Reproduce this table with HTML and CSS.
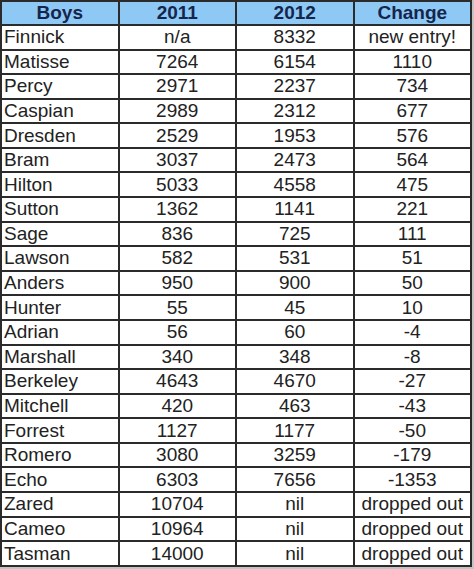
FILE: index.html
```html
<!DOCTYPE html>
<html>
<head>
<meta charset="utf-8">
<link rel="stylesheet" href="styles.css">
</head>
<body>
<table class="names">
<thead>
<tr><th>Boys</th><th>2011</th><th>2012</th><th>Change</th></tr>
</thead>
<tbody>
<tr><td class="name">Finnick</td><td>n/a</td><td>8332</td><td>new entry!</td></tr>
<tr><td class="name">Matisse</td><td>7264</td><td>6154</td><td>1110</td></tr>
<tr><td class="name">Percy</td><td>2971</td><td>2237</td><td>734</td></tr>
<tr><td class="name">Caspian</td><td>2989</td><td>2312</td><td>677</td></tr>
<tr><td class="name">Dresden</td><td>2529</td><td>1953</td><td>576</td></tr>
<tr><td class="name">Bram</td><td>3037</td><td>2473</td><td>564</td></tr>
<tr><td class="name">Hilton</td><td>5033</td><td>4558</td><td>475</td></tr>
<tr><td class="name">Sutton</td><td>1362</td><td>1141</td><td>221</td></tr>
<tr><td class="name">Sage</td><td>836</td><td>725</td><td>111</td></tr>
<tr><td class="name">Lawson</td><td>582</td><td>531</td><td>51</td></tr>
<tr><td class="name">Anders</td><td>950</td><td>900</td><td>50</td></tr>
<tr><td class="name">Hunter</td><td>55</td><td>45</td><td>10</td></tr>
<tr><td class="name">Adrian</td><td>56</td><td>60</td><td>-4</td></tr>
<tr><td class="name">Marshall</td><td>340</td><td>348</td><td>-8</td></tr>
<tr><td class="name">Berkeley</td><td>4643</td><td>4670</td><td>-27</td></tr>
<tr><td class="name">Mitchell</td><td>420</td><td>463</td><td>-43</td></tr>
<tr><td class="name">Forrest</td><td>1127</td><td>1177</td><td>-50</td></tr>
<tr><td class="name">Romero</td><td>3080</td><td>3259</td><td>-179</td></tr>
<tr><td class="name">Echo</td><td>6303</td><td>7656</td><td>-1353</td></tr>
<tr><td class="name">Zared</td><td>10704</td><td>nil</td><td>dropped out</td></tr>
<tr><td class="name">Cameo</td><td>10964</td><td>nil</td><td>dropped out</td></tr>
<tr><td class="name">Tasman</td><td>14000</td><td>nil</td><td>dropped out</td></tr>
</tbody>
</table>
</body>
</html>
```
FILE: styles.css
```css
html, body {
  margin: 0;
  padding: 0;
  background: #c4c4c4;
}
body {
  width: 474px;
  height: 569px;
  overflow: hidden;
}
.names {
  border-collapse: collapse;
  width: 472px;
  height: 567px;
  table-layout: fixed;
  background: #fff;
  font-family: "Liberation Sans", Arial, sans-serif;
  font-size: 19px;
  color: #222;
  border: 2px solid #707070;
}
.names th, .names td {
  border: 2px solid #2b2b2b;
  padding: 0 2px;
  text-align: center;
  line-height: 20px;
  white-space: nowrap;
  height: 22px;
}
.names th {
  background: #8ec8f4;
  color: #15264c;
  font-weight: bold;
}
.names td.name {
  text-align: left;
}
```
